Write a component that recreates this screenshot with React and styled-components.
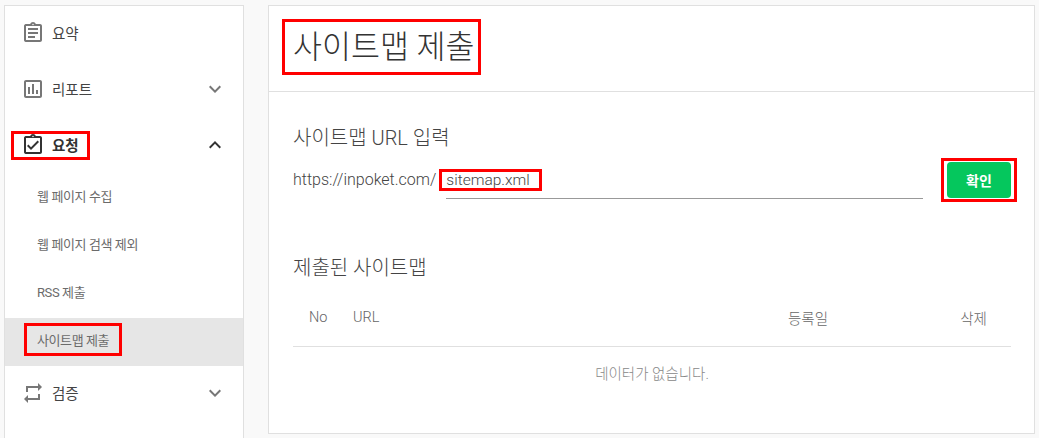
import React from 'react';
import styled, { createGlobalStyle } from 'styled-components';
import {
    MdOutlineAssignment,
    MdOutlineAssessment,
    MdOutlineAssignmentTurnedIn,
    MdRepeat,
    MdExpandMore,
    MdExpandLess
} from 'react-icons/md';

const GlobalStyle = createGlobalStyle`
    html, body {
        margin: 0;
        height: 438px;
        overflow: hidden;
        background: #f9f9f9;
        font-family: Roboto, "Noto Sans CJK KR", sans-serif;
        color: #333;
    }
`;

const Page = styled.div`
    display: flex;
    align-items: flex-start;
    gap: 24px;
    padding: 5px 4px 0 4px;
`;

const Sidebar = styled.nav`
    width: 240px;
    height: 440px;
    flex-shrink: 0;
    box-sizing: border-box;
    background: #fff;
    border: 1px solid #e0e0e0;
`;

const MenuRow = styled.div`
    display: flex;
    align-items: center;
    box-sizing: border-box;
    height: 56px;
    padding: 0 16px 2px 16px;
    font-size: 14.5px;
    font-weight: ${props => (props.$open ? 700 : 400)};
    color: ${props => (props.$open ? '#333' : '#444')};
`;

const MenuIcon = styled.span`
    display: flex;
    margin-right: 7px;
    color: ${props => (props.$open ? '#333' : '#777')};
`;

const MenuLabel = styled.span`
    padding-bottom: 2px;
`;

const Chevron = styled.span`
    display: flex;
    margin-left: auto;
    color: ${props => (props.$open ? '#333' : '#777')};
`;

const SubRow = styled.div`
    display: flex;
    align-items: center;
    box-sizing: border-box;
    height: 48px;
    padding: 0 0 5px 32px;
    font-size: 13px;
    letter-spacing: -0.4px;
    color: #6b6b6b;
    background: ${props => (props.$active ? '#e6e6e6' : 'transparent')};
`;

// the red boxes drawn over the screenshot, they take no room in the flow
const Marked = styled.span`
    position: relative;
    display: inline-flex;
    align-items: center;
    &::after {
        content: '';
        position: absolute;
        inset: ${props => props.$inset};
        border: 3px solid #f00;
        pointer-events: none;
    }
`;

const Main = styled.main`
    width: 767px;
    height: 429px;
    flex-shrink: 0;
    box-sizing: border-box;
    background: #fff;
    border: 1px solid #e0e0e0;
`;

const Header = styled.header`
    display: flex;
    align-items: center;
    box-sizing: border-box;
    height: 86px;
    padding: 0 0 2px 24px;
    border-bottom: 1px solid #e0e0e0;
`;

const Title = styled.h1`
    margin: 0;
    font-size: 31.5px;
    font-weight: 300;
    line-height: 40px;
    color: #333;
`;

const Body = styled.section`
    padding: 33px 23px 0 24px;
`;

const SectionTitle = styled.h2`
    margin: 0;
    font-size: 20px;
    font-weight: 300;
    line-height: 26px;
    color: #444;
`;

const UrlRow = styled.div`
    display: flex;
    align-items: center;
    margin-top: 5px;
    height: 48px;
    font-size: 16px;
    font-weight: 300;
    color: #444;
`;

const Domain = styled.span`
    margin-right: 10px;
    padding-bottom: 2px;
`;

const InputLine = styled.div`
    flex: 1;
    display: flex;
    align-items: center;
    box-sizing: border-box;
    height: 35px;
    margin-top: 3px;
    padding-bottom: 3px;
    font-size: 15.5px;
    border-bottom: 1px solid #999;
`;

const SubmitButton = styled.button`
    width: 64px;
    height: 36px;
    padding: 0;
    border: none;
    border-radius: 4px;
    background: #05c75d;
    color: #fff;
    font-family: inherit;
    font-size: 14px;
    font-weight: 700;
`;

const ButtonMark = styled(Marked)`
    margin-left: 24px;
`;

const SubmittedTitle = styled(SectionTitle)`
    margin-top: 51px;
`;

const TableHead = styled.div`
    display: grid;
    grid-template-columns: 60px 1fr 256px 75px;
    align-items: center;
    height: 58px;
    margin-top: 7px;
    font-size: 14.5px;
    font-weight: 300;
    color: #666;
    border-bottom: 1px solid #e0e0e0;
`;

const HeadCell = styled.div`
    text-align: ${props => props.$align || 'left'};
    padding-left: ${props => props.$pad || '0'};
`;

const Empty = styled.div`
    display: flex;
    align-items: center;
    justify-content: center;
    height: 50px;
    font-size: 14.5px;
    font-weight: 300;
    color: #888;
`;

const App = () => (
    <Page>
        <GlobalStyle />
        <Sidebar>
            <MenuRow>
                <MenuIcon><MdOutlineAssignment size={24} /></MenuIcon>
                <MenuLabel>요약</MenuLabel>
            </MenuRow>
            <MenuRow>
                <MenuIcon><MdOutlineAssessment size={24} /></MenuIcon>
                <MenuLabel>리포트</MenuLabel>
                <Chevron><MdExpandMore size={24} /></Chevron>
            </MenuRow>
            <MenuRow $open>
                <Marked $inset="-2px -11px -3px -10px">
                    <MenuIcon $open><MdOutlineAssignmentTurnedIn size={24} /></MenuIcon>
                    <MenuLabel>요청</MenuLabel>
                </Marked>
                <Chevron $open><MdExpandLess size={24} /></Chevron>
            </MenuRow>
            <SubRow>웹 페이지 수집</SubRow>
            <SubRow>웹 페이지 검색 제외</SubRow>
            <SubRow>RSS 제출</SubRow>
            <SubRow $active>
                <Marked $inset="-7px -13px -7px -13px">사이트맵 제출</Marked>
            </SubRow>
            <MenuRow>
                <MenuIcon><MdRepeat size={24} /></MenuIcon>
                <MenuLabel>검증</MenuLabel>
                <Chevron><MdExpandMore size={24} /></Chevron>
            </MenuRow>
        </Sidebar>
        <Main>
            <Header>
                <Title>
                    <Marked $inset="-9px -6px -7px -11px">사이트맵 제출</Marked>
                </Title>
            </Header>
            <Body>
                <SectionTitle>사이트맵 URL 입력</SectionTitle>
                <UrlRow>
                    <Domain>https://inpoket.com/</Domain>
                    <InputLine>
                        <Marked $inset="-2px -12px -2px -7px">sitemap.xml</Marked>
                    </InputLine>
                    <ButtonMark $inset="-4px -6px -4px -6px">
                        <SubmitButton>확인</SubmitButton>
                    </ButtonMark>
                </UrlRow>
                <SubmittedTitle>제출된 사이트맵</SubmittedTitle>
                <TableHead>
                    <HeadCell $pad="16px">No</HeadCell>
                    <HeadCell>URL</HeadCell>
                    <HeadCell $align="center">등록일</HeadCell>
                    <HeadCell $align="center">삭제</HeadCell>
                </TableHead>
                <Empty>데이터가 없습니다.</Empty>
            </Body>
        </Main>
    </Page>
);

export default App;
